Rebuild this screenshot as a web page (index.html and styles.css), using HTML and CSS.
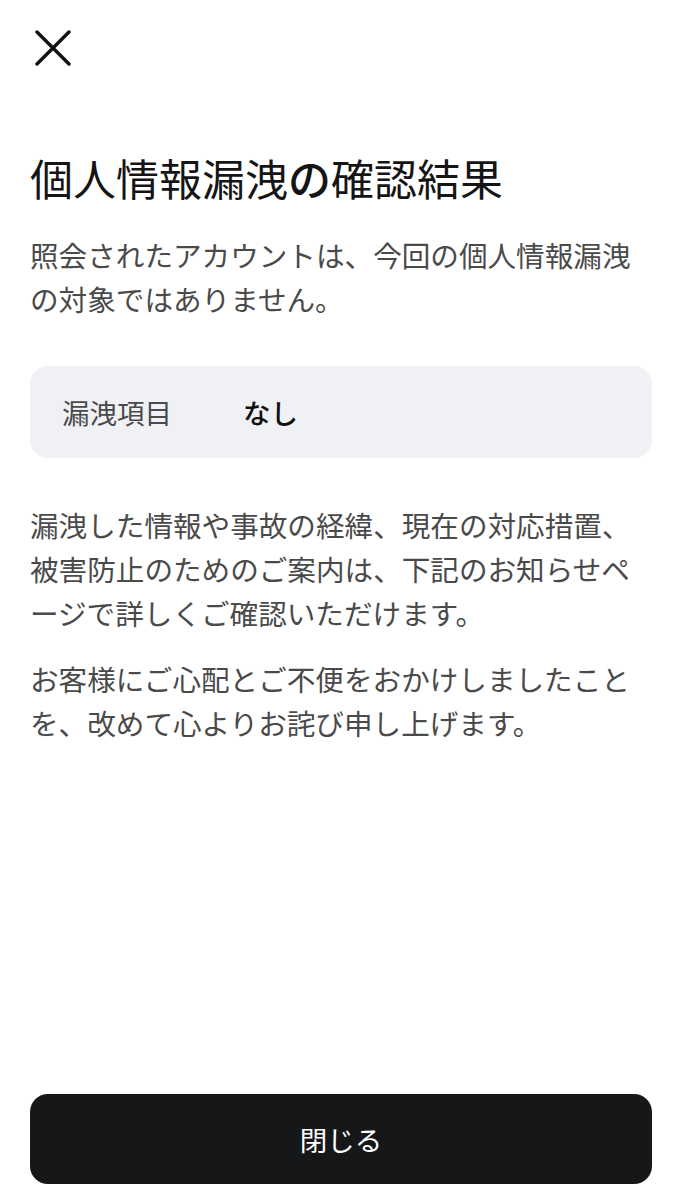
FILE: index.html
```html
<!DOCTYPE html>
<html lang="ja">
<head>
<meta charset="utf-8">
<title>個人情報漏洩の確認結果</title>
<link rel="stylesheet" href="styles.css">
</head>
<body>
<div class="page">
  <div class="top">
    <button class="close" aria-label="閉じる">
      <svg width="36" height="36" viewBox="0 0 36 36"><path d="M2 2 L34 34 M34 2 L2 34" stroke="#111" stroke-width="3.4" stroke-linecap="round" fill="none"/></svg>
    </button>
  </div>
  <h1 class="title">個人情報漏洩<span class="kana">の</span>確認結果</h1>
  <p class="lead">照会されたアカウントは、今回の個人情報漏洩の対象ではありません。</p>
  <div class="card">
    <span class="label">漏洩項目</span>
    <span class="value">なし</span>
  </div>
  <p class="text first">漏洩した情報や事故の経緯、現在の対応措置、被害防止のためのご案内は、下記のお知らせページで詳しくご確認いただけます。</p>
  <p class="text second">お客様にご心配とご不便をおかけしましたことを、改めて心よりお詫び申し上げます。</p>
  <button class="btn">閉じる</button>
</div>
</body>
</html>
```
FILE: styles.css
```css
html, body {
  margin: 0;
  padding: 0;
  background: #fff;
}
body {
  font-family: "Noto Sans CJK JP", "Noto Sans", sans-serif;
}
.page {
  box-sizing: border-box;
  height: 1199px;
  padding: 0 30px;
  display: flex;
  flex-direction: column;
}
.top {
  padding-top: 30px;
  display: flex;
}
.close {
  border: 0;
  background: none;
  padding: 0;
  margin-left: 5px;
  width: 36px;
  height: 36px;
  display: block;
}
.close svg { display: block; }
.title {
  margin: 82px 0 0;
  font-size: 43px;
  line-height: 59px;
  font-weight: 400;
  color: #151515;
  letter-spacing: 0;
}
.title .kana {
  font-weight: 500;
}
.lead {
  margin: 26px 0 0;
  font-size: 28.6px;
  line-height: 44px;
  color: #4a4a4a;
  line-break: strict;
}
.card {
  margin-top: 45px;
  height: 92px;
  background: #f0f1f5;
  border-radius: 18px;
  display: flex;
  align-items: center;
  padding-left: 32px;
}
.label {
  width: 181px;
  font-size: 27.5px;
  color: #4a4a4a;
}
.value {
  font-size: 27.5px;
  font-weight: 500;
  color: #111;
}
.text {
  margin: 0;
  font-size: 28.6px;
  line-height: 44px;
  color: #4a4a4a;
}
.text.first { margin-top: 45px; }
.text.second { margin-top: 22px; }
.btn {
  margin-top: auto;
  margin-bottom: 15px;
  height: 90px;
  border: 0;
  border-radius: 18px;
  background: #161719;
  color: #fff;
  font-family: inherit;
  font-size: 27.5px;
  font-weight: 400;
}
```
